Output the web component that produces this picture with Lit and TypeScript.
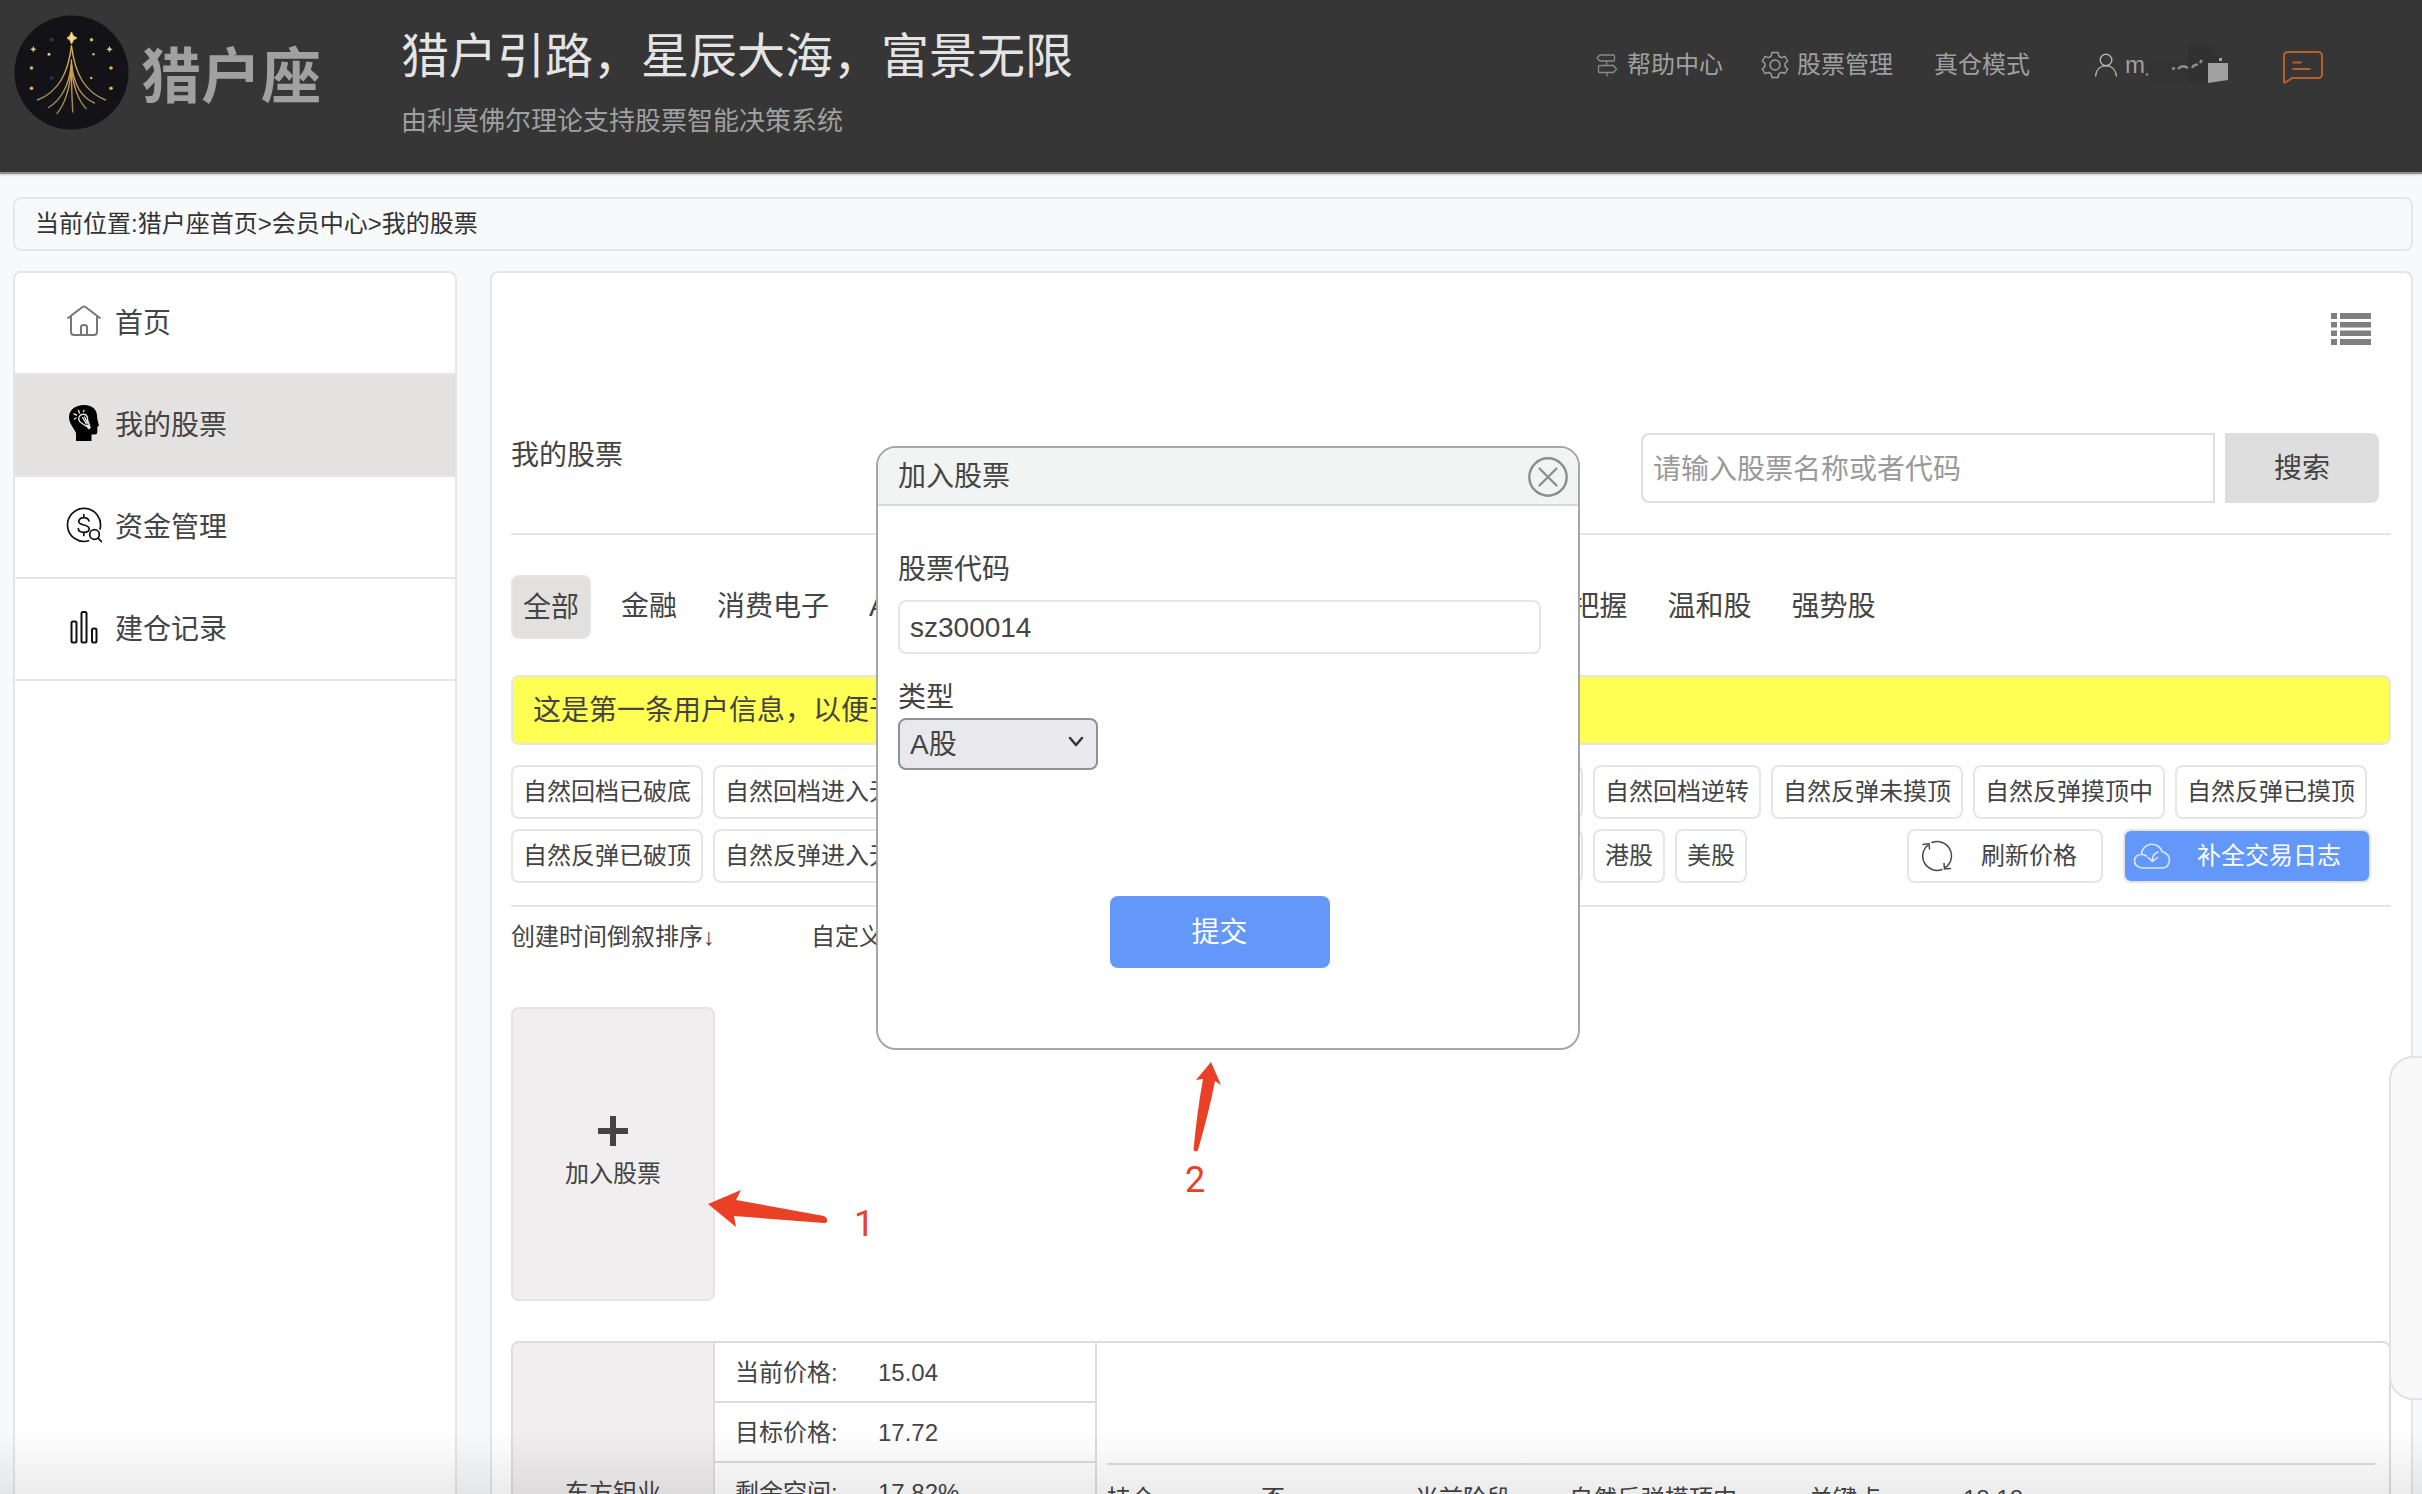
import { LitElement, html, css, svg } from "lit";
import { customElement, state } from "lit/decorators.js";
import { classMap } from "lit/directives/class-map.js";

const logo = svg`<svg class="logo" viewBox="14 15 115 115" aria-hidden="true">
  <defs>
    <linearGradient id="ray" x1="0" y1="46" x2="0" y2="114" gradientUnits="userSpaceOnUse">
      <stop offset="0" stop-color="#e3b75e"/><stop offset=".5" stop-color="#c39a4c"/><stop offset="1" stop-color="#93865f"/>
    </linearGradient>
  </defs>
  <circle cx="71.5" cy="72.5" r="57" fill="#131317"/>
  <g fill="none" stroke="url(#ray)" stroke-width="1.4" stroke-linecap="round">
    <path d="M71.5 46C68 74 58 92 37.500 100"/><path d="M71.500 46C75 74 85 92 105.500 100"/>
    <path d="M71.500 64C69 86 61 100 48.500 107.500"/><path d="M71.500 64C74 86 82 98 94.500 103"/>
    <path d="M71.500 66C70 90 65 104 57 113.500"/><path d="M71.500 66C73 88 78 100 86 108.500"/>
    <path d="M71.500 60C71 82 72 98 72.800 112"/>
  </g>
  <path d="M71.500 32Q72.500 37 77 38Q72.500 39 71.500 44Q70.500 39 67 38Q70.500 37 71.500 32Z" fill="#f6dc92" stroke="#f0c869"/>
  <g fill="#d9c98b">
    <path d="M33.300 46L34.300 48.200L36.500 49.200L34.300 50.200L33.300 52.500L32.300 50.200L30 49.200L32.300 48.200Z"/>
    <path d="M109.500 46L110.500 48.200L112.800 49.200L110.500 50.200L109.500 52.500L108.500 50.200L106.300 49.200L108.500 48.200Z"/>
    <circle cx="49" cy="54.200" r="1.500"/>
  </g>
  <g fill="#d8b457">
    <circle cx="91.500" cy="39.700" r="1.800"/><circle cx="93.500" cy="54.200" r="1.300"/>
    <circle cx="31.500" cy="68" r="1.800"/><circle cx="111" cy="68" r="1.800"/>
    <circle cx="91.200" cy="78" r="1.300"/><circle cx="31.500" cy="88.300" r="1.800"/><circle cx="111" cy="88.300" r="1.800"/>
  </g>
  <g fill="#34343a"><circle cx="51.700" cy="39.700" r="2"/><circle cx="51.700" cy="78" r="1.700"/></g>
</svg>`;

const iconSign = svg`<svg class="i24" viewBox="0 0 24 24" fill="none" stroke="#8a8a8a" stroke-width="1.300" aria-hidden="true">
  <path d="M5 2H18.500Q19.500 2 19.500 3V7Q19.500 8 18.500 8H5L2 5ZM11.500 8V12.500M4.500 12.500H18.500L21.500 16L18.500 19.500H4.500Q3.500 19.500 3.500 18.500V13.500Q3.500 12.500 4.500 12.500ZM12 19.500V23.500"/></svg>`;

const iconGear = svg`<svg class="i28" viewBox="0 0 28 28" fill="none" stroke="#a0a0a0" stroke-width="1.400" stroke-linejoin="round" aria-hidden="true">
  <path d="M11 1.500H17L18 5.300L20.500 6.700L24 5.500L26.700 10L24 12.500V15.500L26.700 18L24 22.500L20.500 21.300L18 22.700L17 26.500H11L10 22.700L7.500 21.300L4 22.500L1.300 18L4 15.500V12.500L1.300 10L4 5.500L7.500 6.700L10 5.300Z"/>
  <circle cx="14" cy="14" r="5"/></svg>`;

const iconUser = svg`<svg class="i24" viewBox="0 0 24 24" fill="none" stroke="#b4b4b4" stroke-width="1.400" aria-hidden="true">
  <circle cx="12" cy="7" r="5.800"/><path d="M1.500 23.500C2 17 6 12.900 12 12.900S22 17 22.500 23.500"/></svg>`;

const nameMask = svg`<svg class="mask" viewBox="0 0 84 44" aria-hidden="true">
  <path d="M4 22H44V42H10Q4 36 4 22Z" fill="#333"/>
  <path d="M44 2H64L76 18V22H64V42H44Z" fill="#313131"/>
  <path d="M2 33L4 34M28 28L31 27M34 28Q38 23 44 27M48 27Q50 23 54 24M56 22L58 19" stroke="#8e8e8e" stroke-width="2.500" fill="none"/>
  <rect x="75" y="17" width="3" height="3" fill="#a5a5a5"/>
  <path d="M64 22H84V39L64 42Z" fill="#a0a0a0"/></svg>`;

const iconMessage = svg`<svg class="message" viewBox="0 0 40 34" fill="none" stroke="#b9602a" stroke-width="2" stroke-linejoin="round" aria-hidden="true">
  <path d="M5 2H35Q39 2 39 6V24Q39 28 35 28H9L2.500 32.500H1V6Q1 2 5 2Z"/><path d="M9.500 12.500H18.500M9.500 19H27.500"/></svg>`;

const iconHome = svg`<svg class="i36" viewBox="0 0 36 36" fill="none" stroke="#777" stroke-width="2" stroke-linecap="round" stroke-linejoin="round" aria-hidden="true">
  <path d="M2 15L16.500 4Q18 3 19.500 4L34 15M5 14V29Q5 32 8 32H28Q31 32 31 29V14M15 31.500V24Q15 22 18 22T21 24V31.500"/></svg>`;

const iconMind = svg`<svg class="i36" viewBox="0 0 36 36" aria-hidden="true">
  <path d="M10 36V28C8 23 3 19 3 12C3 5 9 0 18 0C27 0 31 5 31 11L31.500 15L33 20.500L31.300 22V27Q31.300 29.500 28.500 29.500H25.500V36Z" fill="#000"/>
  <g fill="none" stroke="#e3e2e0" stroke-width="1.400" stroke-linecap="round">
    <path d="M13 12Q15 8.500 19 9.500Q22 11 21.500 15L23.500 20L20 21L15.500 18Q12 16 13 12ZM16.500 12.500L20.500 19M18.500 12L21.500 18"/>
    <path d="M8.500 14L10 13M8 9L10.500 10M12.500 5.500L13.500 8M17.500 6.500L18 5.500"/>
  </g>
  <path d="M20 21L23.500 19.500L25 23L22.500 24.500Z" fill="#e3e2e0"/></svg>`;

const iconMoney = svg`<svg class="i36" viewBox="0 0 36 36" fill="none" stroke="#111" stroke-width="1.700" stroke-linecap="round" aria-hidden="true">
  <path d="M22.500 33.800A16.500 16.500 0 1 1 34 22"/><path d="M17.800 7.500V10.500M17.800 25.500V28.500M23 14Q22 10.700 17.800 10.700T12.700 14.300Q12.700 17 17.800 18T23.200 21.700Q23.200 25.300 17.800 25.300T12.300 21.500"/>
  <circle cx="28.500" cy="27.500" r="4.800"/><path d="M32 31L35.500 34.700"/></svg>`;

const iconBars = svg`<svg class="i36" viewBox="0 0 36 36" fill="none" stroke="#111" stroke-width="2" aria-hidden="true">
  <rect x="5.500" y="12.500" width="5" height="21" rx="1.500"/><rect x="15.500" y="3" width="5" height="30.500" rx="1.500"/><rect x="26" y="19.500" width="4.500" height="14" rx="1.500"/></svg>`;

const iconList = svg`<svg class="list" viewBox="0 0 40 32" fill="#7f7f7f" aria-hidden="true">
  <path d="M0 0H6V6H0ZM9 0H40V6H9ZM0 9H6V14.500H0ZM9 9H40V14.500H9ZM0 17.500H6V23H0ZM9 17.500H40V23H9ZM0 26H6V32H0ZM9 26H40V32H9Z"/></svg>`;

const iconRefresh = svg`<svg class="i32" viewBox="0 0 32 32" fill="none" stroke="#4a4a4a" stroke-width="1.500" stroke-linecap="round" aria-hidden="true">
  <path d="M11 2.500A14.300 14.300 0 0 1 24 27.800M21 29.500A14.300 14.300 0 0 1 7 5"/><path d="M2 4.500L8 3.500L8.500 9M29.500 28.500L23.500 29L23 23.500"/></svg>`;

const iconCloud = svg`<svg class="cloud" viewBox="0 0 38 28" fill="none" stroke="#dce8ff" stroke-width="1.600" stroke-linecap="round" stroke-linejoin="round" aria-hidden="true">
  <path d="M8.500 12.500A10.500 10.500 0 0 1 29 9.500Q36.500 12 36.500 18.500Q36 26 28.500 26H9Q1.500 25 1.500 18.500Q2 12.500 8.500 12.500Q11.500 12.500 13.500 14M25 10Q19 12 19.500 19M15 15.500L19.500 19.500L24.500 15.500"/></svg>`;

const iconPlus = svg`<svg class="plus" viewBox="0 0 30 30" fill="#444" aria-hidden="true"><path d="M12 0H18V12H30V18H18V30H12V18H0V12H12Z"/></svg>`;

const iconClose = svg`<svg class="i40" viewBox="0 0 40 40" fill="none" stroke="#8e8e8e" stroke-width="2.400" stroke-linecap="round" aria-hidden="true">
  <circle cx="20" cy="20" r="18.700"/><path d="M11.500 11.500L28.500 28.500M28.500 11.500L11.500 28.500"/></svg>`;

const menu = [
  { label: "首页", icon: iconHome },
  { label: "我的股票", icon: iconMind },
  { label: "资金管理", icon: iconMoney },
  { label: "建仓记录", icon: iconBars },
];

const groups = ["全部", "金融", "消费电子", "AI概念", "新能源", "医药生物", "半导体", "房地产", "没有把握", "温和股", "强势股"];

const stages = [
  "自然回档已破底", "自然回档进入无底状态", "自然回档未触底", "自然回档触底中", "自然回档已触底", "自然回档逆转",
  "自然反弹未摸顶", "自然反弹摸顶中", "自然反弹已摸顶", "自然反弹已破顶", "自然反弹进入无顶状态", "自然反弹逆转",
  "主要上升趋势中", "次级反弹趋势已成", "港股", "美股",
];

const prices = [["当前价格:", "15.04"], ["目标价格:", "17.72"], ["剩余空间:", "17.82%"]];

@customElement("app-root")
export class AppRoot extends LitElement {
  @state() private activeMenu = 1;
  @state() private activeGroup = 0;
  @state() private dialogOpen = true;

  static styles = css`
    :host { display: block; }
    * { box-sizing: border-box; }
    .page {
      position: relative; height: 100vh; overflow: hidden; background: #f8f9fb; color: #444;
      font: 24px/36px "Liberation Sans", "Noto Sans CJK SC", sans-serif;
    }
    button, input, select { font: inherit; color: inherit; margin: 0; }
    button { background: none; border: 0; padding: 0; cursor: pointer; }
    a { color: inherit; text-decoration: none; }
    h1, h2, p, dl, dd, ul { margin: 0; padding: 0; font-weight: 400; list-style: none; }
    svg { display: block; flex: none; }
    .i24 { width: 24px; height: 24px; }
    .i28 { width: 28px; height: 28px; }
    .i32 { width: 32px; height: 32px; }
    .i36 { width: 36px; height: 36px; }
    .i40 { width: 40px; height: 40px; }

    .header {
      display: flex; align-items: flex-start; height: 174px; padding: 0 99px 0 14px;
      background: #363636; border-bottom: 2px solid #8f8f8f; box-shadow: 0 1px 2px #ccc; color: #a0a0a0;
    }
    .brand { display: flex; gap: 12px; padding-top: 15px; }
    .logo { width: 115px; height: 115px; }
    .brand-name { font-size: 60px; line-height: 126px; font-weight: 700; }
    .slogan { margin-left: 80px; padding-top: 27px; }
    .slogan-title { font-size: 48px; line-height: 60px; color: #e4e4e4; }
    .slogan-sub { font-size: 26px; line-height: 36px; padding-top: 16px; }
    .nav { display: flex; align-items: center; height: 130px; margin-left: auto; gap: 38px; }
    .nav a { display: flex; align-items: center; gap: 8px; }
    .nav .mode { margin-left: 3px; }
    .nav .user { margin-left: 26px; gap: 7px; }
    .mask { width: 84px; height: 44px; margin: -4px 0 0 -8px; }
    .message { width: 40px; height: 34px; margin: 4px 0 0 17px; }

    .body { padding: 23px 9px 0 13px; }
    .crumbs { height: 54px; border: 2px solid #e5e6e7; border-radius: 8px; padding: 0 20px; line-height: 50px; color: #333; }
    .columns { display: flex; gap: 33px; margin-top: 20px; height: 1600px; }
    .sidebar { flex: 0 0 444px; background: #fff; border: 2px solid #e5e5e5; border-radius: 8px; overflow: hidden; }
    .sidebar a { display: flex; align-items: center; gap: 13px; height: 102px; padding: 2px 0 0 51px; border-bottom: 2px solid #e5e5e5; font-size: 28px; }
    .sidebar a svg { margin-bottom: 6px; }
    .sidebar a.active { background: #e3e2e0; }

    .main { flex: 1; min-width: 0; background: #fff; border: 2px solid #e5e5e5; border-radius: 8px; padding: 40px 20px 0 19px; }
    .tools { display: flex; justify-content: flex-end; padding-right: 20px; }
    .list { width: 40px; height: 32px; }
    .heading { display: flex; align-items: flex-start; justify-content: space-between; margin-top: 88px; padding: 0 12px 30px 0; border-bottom: 2px solid #e5e5e5; }
    .heading h2 { font-size: 28px; line-height: 46px; }
    .search { display: flex; gap: 10px; font-size: 28px; }
    .search input { width: 574px; height: 70px; border: 2px solid #dedede; border-radius: 8px 0 0 8px; padding: 4px 10px 0; background: #fff; outline: 0; }
    .search input::placeholder { color: #999; opacity: 1; }
    .search button { width: 154px; height: 70px; padding-top: 2px; background: #dedede; border-radius: 0 8px 8px 0; }
    .tabs { display: flex; align-items: center; gap: 20px; height: 64px; margin-top: 40px; font-size: 28px; white-space: nowrap; }
    .tabs button { height: 64px; padding: 0 10px; border-radius: 8px; }
    .tabs button.active { padding-top: 2px; background: #e2e1e0; border: 2px solid #e5e5e5; }
    .notice { margin-top: 36px; height: 70px; border: 2px solid #e5e5e5; border-radius: 8px; padding: 0 20px; background: #ffff54; font-size: 28px; line-height: 68px; }
    .chips { display: flex; flex-wrap: wrap; gap: 10px; margin-top: 20px; padding-bottom: 22px; border-bottom: 2px solid #e5e5e5; }
    .chip { height: 54px; padding: 0 10px; border: 2px solid #e5e5e5; border-radius: 8px; background: #fff; white-space: nowrap; }
    .actions { display: flex; gap: 20px; margin: 0 20px 0 auto; }
    .action { display: flex; align-items: center; gap: 28px; padding: 0 24px 0 12px; }
    .action.primary { gap: 26px; padding: 0 28px 0 8px; background: #6398fa; color: #fff; }
    .cloud { width: 38px; height: 28px; }
    .sorts { display: flex; gap: 96px; margin-top: 12px; }
    .add { position: relative; width: 204px; margin-top: 52px; }
    .add-card { display: flex; flex-direction: column; align-items: center; justify-content: center; gap: 10px; width: 204px; height: 294px; background: #f0eeef; border: 2px solid #e4e4e4; border-radius: 8px; }
    .plus { width: 30px; height: 30px; }
    .mark { position: absolute; overflow: visible; fill: #ea4025; font: 36px Roboto, sans-serif; pointer-events: none; text-anchor: middle; }
    .mark-one { left: 190px; top: 170px; width: 190px; height: 70px; }
    .mark-two { left: 300px; top: 606px; width: 60px; height: 150px; }

    .stock { display: flex; height: 400px; margin-top: 40px; border: 2px solid #dcdcdc; border-radius: 8px 8px 0 0; overflow: hidden; }
    .stock-name { flex: 0 0 202px; display: flex; justify-content: center; padding-top: 132px; background: #f0eeef; border-right: 2px solid #dcdcdc; }
    .prices { flex: 0 0 382px; border-right: 2px solid #dcdcdc; }
    .price { display: flex; height: 60px; padding-left: 20px; border-bottom: 2px solid #dcdcdc; line-height: 60px; }
    .price dt { flex: 0 0 143px; }
    .detail { flex: 1; padding: 120px 14px 0 10px; }
    .facts { display: grid; grid-template-columns: 154px 154px 154px 240px 154px 1fr; border-top: 2px solid #dcdcdc; padding-top: 16px; }

    .drawer { position: absolute; right: -20px; top: 1056px; width: 53px; height: 344px; background: #f8f8f8; border: 2px solid #e2e2e2; border-radius: 24px; }
    .fade { position: absolute; left: 0; right: 0; bottom: 0; height: 64px; background: linear-gradient(rgba(0, 0, 0, 0), rgba(0, 0, 0, 0.08)); pointer-events: none; }

    .dialog-area { position: absolute; left: calc(50% - 335px); top: 446px; width: 704px; }
    .dialog { height: 604px; background: #fff; border: 2px solid #a6a6a6; border-radius: 20px; overflow: hidden; font-size: 28px; }
    .dialog-head { display: flex; align-items: center; justify-content: space-between; height: 58px; padding: 2px 10px 0 20px; background: #f2f4f3; border-bottom: 2px solid #d5dbdb; }
    .dialog-head h2 { font-size: 28px; }
    .dialog-form { display: flex; flex-direction: column; align-items: flex-start; padding: 46px 37px 0 20px; }
    .dialog-form label { line-height: 36px; }
    .code { width: 100%; height: 54px; margin: 12px 0 26px; padding: 2px 10px 0; border: 2px solid #e5e5e5; border-radius: 8px; outline: 0; background: #fff; }
    .select { position: relative; margin-top: 2px; }
    .select select { display: block; appearance: none; width: 200px; height: 52px; padding: 2px 10px 0; background: #e9e8ed; border: 2px solid #8f8f9d; border-radius: 8px; }
    .chevron { position: absolute; right: 14px; top: 18px; width: 16px; height: 11px; pointer-events: none; }
    .submit { align-self: center; width: 220px; height: 72px; margin-top: 126px; padding-top: 2px; background: #6398fa; border-radius: 8px; color: #fff; }
  `;

  private renderDialog() {
    return html`<div class="dialog-area">
      <section class="dialog" role="dialog" aria-labelledby="dialog-title">
        <div class="dialog-head">
          <h2 id="dialog-title">加入股票</h2>
          <button type="button" aria-label="关闭" @click=${() => (this.dialogOpen = false)}>${iconClose}</button>
        </div>
        <form class="dialog-form" @submit=${(e: Event) => e.preventDefault()}>
          <label for="code">股票代码</label>
          <input class="code" id="code" type="text" .value=${"sz300014"} />
          <label for="kind">类型</label>
          <div class="select">
            <select id="kind"><option>A股</option><option>港股</option><option>美股</option></select>
            <svg class="chevron" viewBox="0 0 16 11" fill="none" stroke="#333" stroke-width="2.500" stroke-linecap="round" stroke-linejoin="round" aria-hidden="true"><path d="M2 2L8 9L14 2"/></svg>
          </div>
          <button class="submit" type="submit">提交</button>
        </form>
      </section>
      <svg class="mark mark-two" viewBox="0 0 60 150">
        <path d="M35 10L45 33L39 29Q33 60 22 98Q20 101 17.500 98Q21 60 27 27L20 28Z"/>
        <text x="19" y="140">2</text>
      </svg>
    </div>`;
  }

  render() {
    return html`<div class="page">
      <header class="header">
        <div class="brand">${logo}<span class="brand-name">猎户座</span></div>
        <div class="slogan">
          <h1 class="slogan-title">猎户引路，星辰大海，富景无限</h1>
          <p class="slogan-sub">由利莫佛尔理论支持股票智能决策系统</p>
        </div>
        <nav class="nav">
          <a href="#help">${iconSign}帮助中心</a>
          <a href="#manage">${iconGear}股票管理</a>
          <a class="mode" href="#mode">真仓模式</a>
          <a class="user" href="#user">${iconUser}<span>m</span>${nameMask}</a>
          <a href="#message" aria-label="消息">${iconMessage}</a>
        </nav>
      </header>

      <div class="body">
        <div class="crumbs">当前位置:<a href="#home">猎户座首页</a>&gt;<a href="#member">会员中心</a>&gt;<a href="#stocks">我的股票</a></div>
        <div class="columns">
          <nav class="sidebar">
            ${menu.map((m, i) => html`<a href="#menu" class=${classMap({ active: i === this.activeMenu })} @click=${() => (this.activeMenu = i)}>${m.icon}${m.label}</a>`)}
          </nav>

          <main class="main">
            <div class="tools"><button type="button" aria-label="列表">${iconList}</button></div>
            <div class="heading">
              <h2>我的股票</h2>
              <form class="search" @submit=${(e: Event) => e.preventDefault()}>
                <input type="text" placeholder="请输入股票名称或者代码" aria-label="请输入股票名称或者代码" />
                <button type="submit">搜索</button>
              </form>
            </div>
            <div class="tabs">
              ${groups.map((g, i) => html`<button type="button" class=${classMap({ active: i === this.activeGroup })} @click=${() => (this.activeGroup = i)}>${g}</button>`)}
            </div>
            <p class="notice">这是第一条用户信息，以便于您了解系统</p>
            <div class="chips">
              ${stages.map((s) => html`<button type="button" class="chip">${s}</button>`)}
              <div class="actions">
                <button type="button" class="chip action">${iconRefresh}刷新价格</button>
                <button type="button" class="chip action primary">${iconCloud}补全交易日志</button>
              </div>
            </div>
            <div class="sorts"><a href="#created">创建时间倒叙排序↓</a><a href="#custom">自定义排序</a></div>
            <div class="add">
              <button type="button" class="add-card" @click=${() => (this.dialogOpen = true)}>${iconPlus}<span>加入股票</span></button>
              <svg class="mark mark-one" viewBox="0 0 190 70">
                <path d="M7 27L40 13L35 23L123 39Q127 41 126 44Q126 46 123 46L33 39L35 50Z"/>
                <text x="163" y="59">1</text>
              </svg>
            </div>
            <article class="stock">
              <a class="stock-name" href="#stock">东方钽业</a>
              <dl class="prices">
                ${prices.map(([k, v]) => html`<div class="price"><dt>${k}</dt><dd>${v}</dd></div>`)}
              </dl>
              <div class="detail">
                <div class="facts"><span>持仓</span><span>否</span><span>当前阶段</span><span>自然反弹摸顶中</span><span>关键点</span><span>18.18</span></div>
              </div>
            </article>
          </main>
        </div>
      </div>

      <aside class="drawer"></aside>
      ${this.dialogOpen ? this.renderDialog() : ""}
      <div class="fade"></div>
    </div>`;
  }
}
